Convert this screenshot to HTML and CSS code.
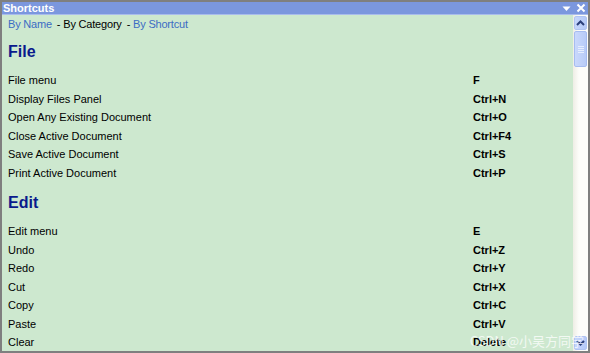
FILE: index.html
```html
<!DOCTYPE html>
<html lang="en">
<head>
    <meta charset="UTF-8">
    <title>Shortcuts</title>
    <link rel="stylesheet" href="styles.css">
</head>
<body>
    <div class="panel">
        <div class="titlebar">
            <span class="title">Shortcuts</span>
            <div class="title-icons">
                <svg width="9" height="9" viewBox="0 0 9 9"><path d="M0.5 2.5 H8.5 L4.5 7 Z" fill="#fff"/></svg>
                <svg width="10" height="10" viewBox="0 0 10 10"><path d="M1.5 1.5 L8.5 8.5 M8.5 1.5 L1.5 8.5" stroke="#fff" stroke-width="2"/></svg>
            </div>
        </div>

        <div class="main">
            <div class="content">
                <div class="nav">
                    <a class="link">By Name</a>
                    <span class="sep">-</span>
                    <span>By Category</span>
                    <span class="sep">-</span>
                    <a class="link">By Shortcut</a>
                </div>

                <h2 class="first">File</h2>
                <div class="rows">
                    <span>File menu</span><b>F</b>
                    <span>Display Files Panel</span><b>Ctrl+N</b>
                    <span>Open Any Existing Document</span><b>Ctrl+O</b>
                    <span>Close Active Document</span><b>Ctrl+F4</b>
                    <span>Save Active Document</span><b>Ctrl+S</b>
                    <span>Print Active Document</span><b>Ctrl+P</b>
                </div>

                <h2>Edit</h2>
                <div class="rows">
                    <span>Edit menu</span><b>E</b>
                    <span>Undo</span><b>Ctrl+Z</b>
                    <span>Redo</span><b>Ctrl+Y</b>
                    <span>Cut</span><b>Ctrl+X</b>
                    <span>Copy</span><b>Ctrl+C</b>
                    <span>Paste</span><b>Ctrl+V</b>
                    <span>Clear</span><b>Delete</b>
                </div>
            </div>

            <div class="scrollbar">
                <div class="sb-btn">
                    <svg width="9" height="6" viewBox="0 0 9 6"><path d="M1 5 L4.5 1.5 L8 5" stroke="#2b3f7a" stroke-width="2" fill="none"/></svg>
                </div>
                <div class="sb-thumb">
                    <i></i><i></i><i></i><i></i>
                </div>
                <div class="sb-track"></div>
                <div class="sb-btn">
                    <svg width="9" height="6" viewBox="0 0 9 6"><path d="M1 1 L4.5 4.5 L8 1" stroke="#2b3f7a" stroke-width="2" fill="none"/></svg>
                </div>
            </div>
        </div>

        <div class="watermark">CSDN @小吴方同学</div>
    </div>
</body>
</html>
```

FILE: styles.css
```css
* {
    margin: 0;
    padding: 0;
    box-sizing: border-box;
}

body {
    font-family: "Liberation Sans", Arial, sans-serif;
    font-size: 11px;
    color: #000;
    background: #808080;
}

.panel {
    position: relative;
    width: 590px;
    height: 353px;
    border: 2px solid #7f7f7f;
    display: flex;
    flex-direction: column;
    overflow: hidden;
}

.titlebar {
    height: 13px;
    background: #7b97de;
    border-bottom: 1px solid #a9bcec;
    display: flex;
    align-items: center;
    justify-content: space-between;
    padding: 0 2px 0 1px;
}

.title {
    color: #fff;
    font-weight: bold;
    font-size: 11px;
    line-height: 12px;
}

.title-icons {
    display: flex;
    align-items: center;
    gap: 5px;
}

.title-icons svg {
    display: block;
}

.main {
    flex: 1;
    display: flex;
    min-height: 0;
}

.content {
    flex: 1;
    background: #cde8cf;
    padding: 0 6px;
    overflow: hidden;
}

.nav {
    height: 18px;
    line-height: 18px;
    display: flex;
    gap: 3px;
    letter-spacing: -0.2px;
}

.link {
    color: #3b6cc4;
}

.sep {
    margin-left: 2px;
}

h2 {
    font-size: 16px;
    line-height: 20px;
    font-weight: bold;
    color: #0a1a8c;
    margin: 11px 0 9px;
}

h2.first {
    margin-top: 9px;
}

.rows {
    display: grid;
    grid-template-columns: 465px 1fr;
    grid-auto-rows: 18.5px;
    align-items: center;
}

.rows b {
    font-weight: bold;
}

.scrollbar {
    width: 15px;
    background: linear-gradient(to right, #eeede5, #fdfdfa 40%, #fdfdfa);
    display: flex;
    flex-direction: column;
    padding: 1px;
}

.sb-btn {
    height: 14px;
    background: linear-gradient(to right, #c6d6fb, #b5c9f8);
    border: 1px solid #b0c4f2;
    border-radius: 2px;
    display: flex;
    align-items: center;
    justify-content: center;
}

.sb-thumb {
    height: 36px;
    margin-top: 1px;
    background: linear-gradient(to right, #c9d8fc, #b8cbf8);
    border: 1px solid #a6bcf1;
    border-radius: 2px;
    display: flex;
    flex-direction: column;
    align-items: center;
    justify-content: center;
    gap: 1px;
}

.sb-thumb i {
    display: block;
    width: 6px;
    height: 1px;
    background: #e6eefe;
}

.sb-track {
    flex: 1;
}

.watermark {
    position: absolute;
    right: 4px;
    bottom: 2px;
    font-family: "Noto Sans CJK SC", sans-serif;
    font-size: 13px;
    line-height: 16px;
    color: rgba(255, 255, 255, 0.75);
}
```
